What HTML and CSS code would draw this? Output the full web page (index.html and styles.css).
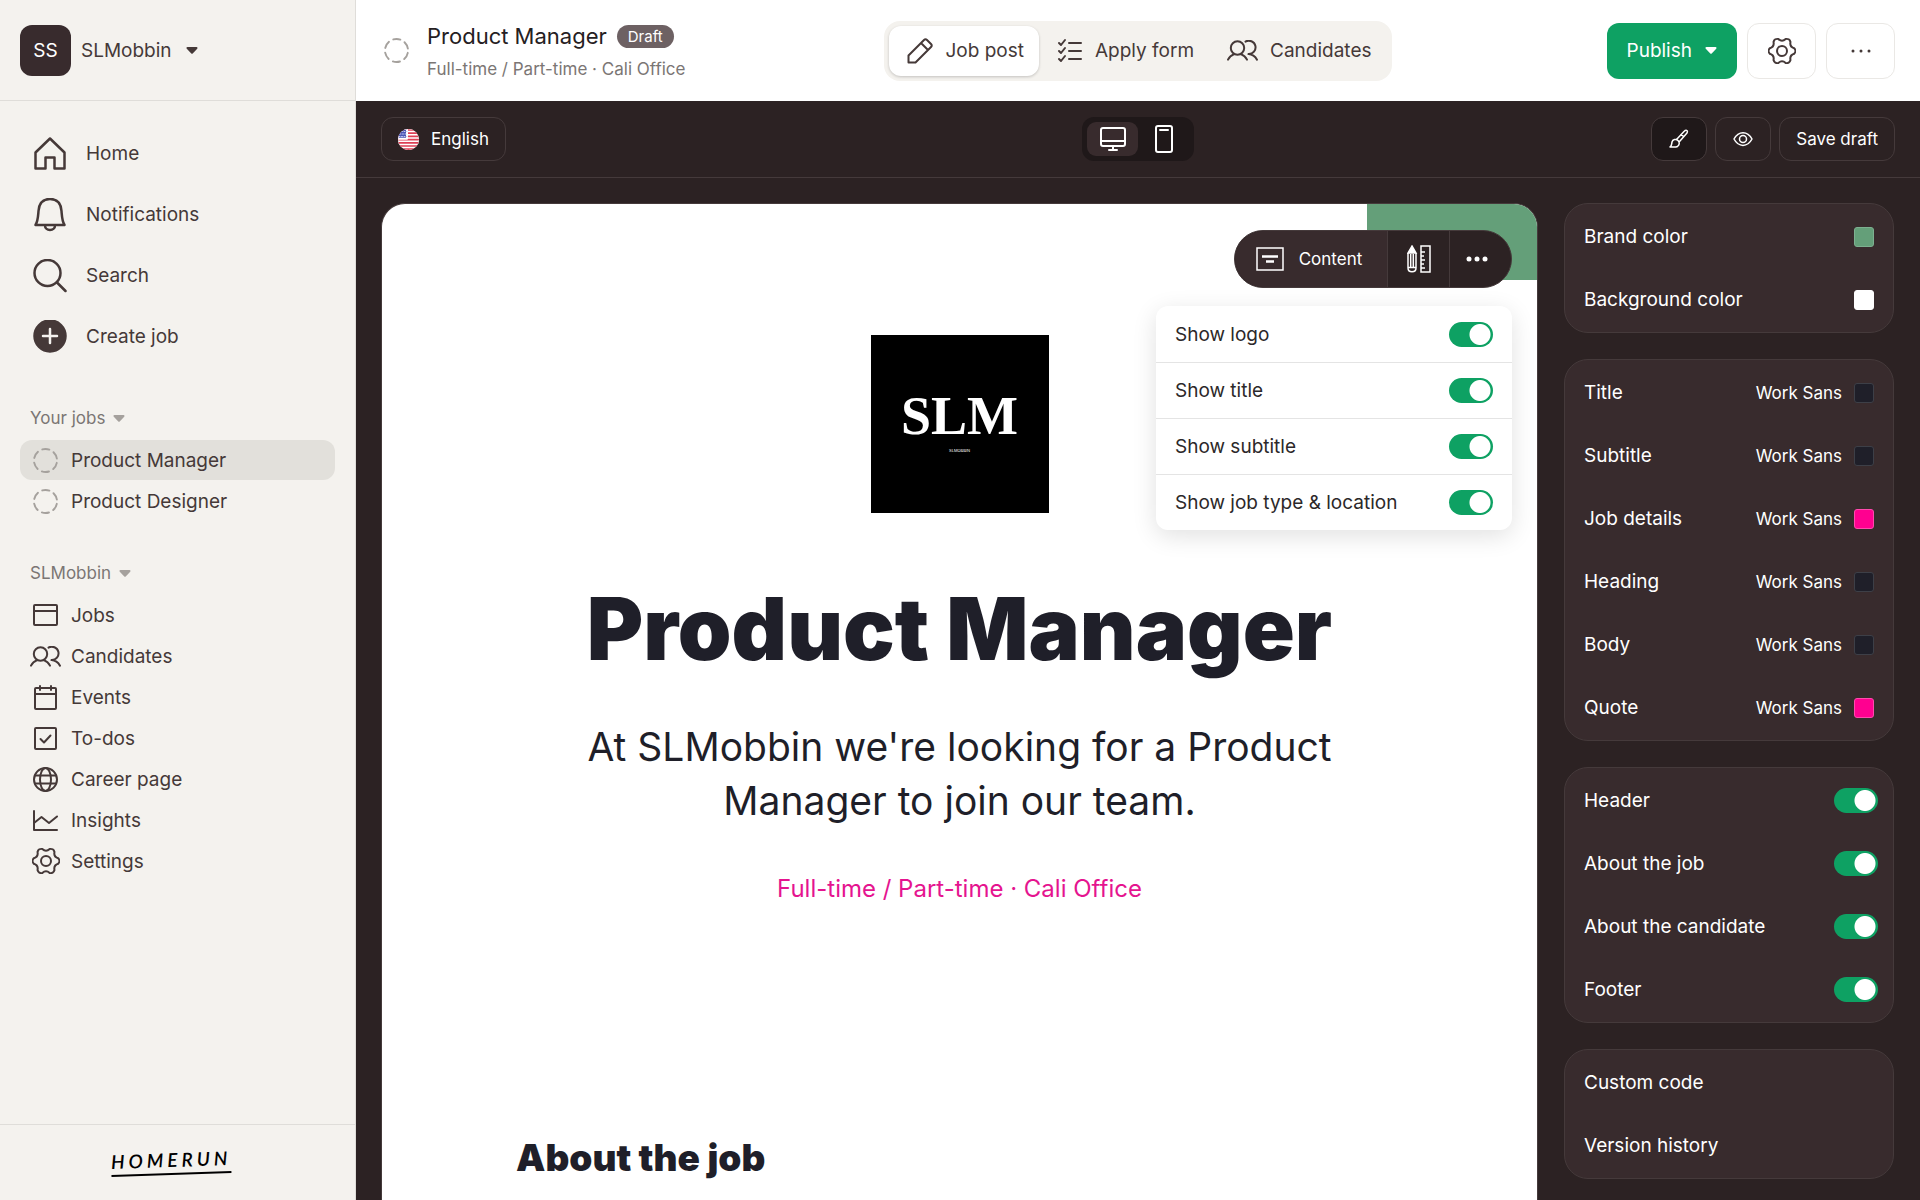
FILE: index.html
```html
<!DOCTYPE html>
<html lang="en">
<head>
    <meta charset="UTF-8">
    <meta name="viewport" content="width=device-width, initial-scale=1.0">
    <title>Product Manager - Homerun</title>
    <link rel="stylesheet" href="styles.css">
</head>
<body>
    <svg class="sprite" aria-hidden="true">
        <symbol id="dashed" viewBox="0 0 26 26"><circle cx="13" cy="13" r="12" stroke-dasharray="7.5 5.066" stroke-dashoffset="-2.5"/></symbol>
        <symbol id="caret" viewBox="0 0 12 7"><path d="M1.5 1h9L6 5.700z" fill="currentColor"/></symbol>
        <symbol id="people" viewBox="0 0 31 21"><circle cx="10.500" cy="8" r="6.700"/><path d="M1 19.700c1.500-3.200 3.500-4.700 6.300-5.600M20 19.700c-1.500-3.200-3.500-4.700-6.300-5.600M18.500 1.600a6.700 6.700 0 1 1 3 12.500c4.500.3 6.800 2.600 8.500 5.600"/></symbol>
        <symbol id="gear" viewBox="0 0 28 28"><circle cx="14" cy="14" r="5"/><path d="M26.200 11.200A4 4 0 0 1 26.200 16.800Q21.400 18.300 22.500 23.100A4 4 0 0 1 17.700 26Q14 22.500 10.300 26A4 4 0 0 1 5.500 23.100Q6.600 18.300 1.800 16.800A4 4 0 0 1 1.800 11.200Q6.600 9.700 5.500 4.900A4 4 0 0 1 10.300 2Q14 5.500 17.700 2A4 4 0 0 1 22.500 4.900Q21.400 9.700 26.200 11.200z"/></symbol>
    </svg>

    <div class="app">
        <aside class="sidebar">
            <button class="account" type="button">
                <span class="avatar">SS</span>
                <span>SLMobbin</span>
                <svg class="caret" width="12" height="7"><use href="#caret"/></svg>
            </button>

            <nav class="side-body">
                <div class="main-nav">
                    <a href="#">
                        <svg width="34" height="34" viewBox="0 0 34 34"><path d="M2.500 15.500 17 1.500l14.500 14V31.500H21.500V20.500h-9V31.500H2.500z"/></svg>
                        Home
                    </a>
                    <a href="#">
                        <svg width="34" height="34" viewBox="0 0 34 34"><path d="M2.500 27c2.500-4 2.500-8 3-14C6 5 10.500 1 17 1s11 4 11.500 12c.5 6 .5 10 3 14zM12 27.500c0 2.500 2 4.500 5 4.500s5-2 5-4.500"/></svg>
                        Notifications
                    </a>
                    <a href="#">
                        <svg width="34" height="34" viewBox="0 0 34 34"><circle cx="14.500" cy="14" r="13"/><path d="m24 23.500 8.500 8.500"/></svg>
                        Search
                    </a>
                    <a href="#">
                        <svg width="34" height="34" viewBox="0 0 34 34"><circle cx="17" cy="16" r="15.500" fill="currentColor"/><path d="M17 9v14M10 16h14" stroke="#f4f2ee"/></svg>
                        Create job
                    </a>
                </div>

                <button class="section-title" type="button">Your jobs <svg width="12" height="7"><use href="#caret"/></svg></button>
                <div class="sub-nav">
                    <a class="active" href="#"><svg class="dashed" width="25" height="25"><use href="#dashed"/></svg>Product Manager</a>
                    <a href="#"><svg class="dashed" width="25" height="25"><use href="#dashed"/></svg>Product Designer</a>
                </div>

                <button class="section-title" type="button">SLMobbin <svg width="12" height="7"><use href="#caret"/></svg></button>
                <div class="sub-nav">
                    <a href="#"><svg width="25" height="25" viewBox="0 0 25 25"><rect x="1" y="2" width="23" height="20" rx="1"/><path d="M1 8h23"/></svg>Jobs</a>
                    <a href="#"><svg width="31" height="21"><use href="#people"/></svg>Candidates</a>
                    <a href="#"><svg width="25" height="25" viewBox="0 0 25 25"><rect x="2" y="3" width="21" height="21" rx="1"/><path d="M2 9h21M7 1v4M18 1v4"/></svg>Events</a>
                    <a href="#"><svg width="25" height="25" viewBox="0 0 25 25"><rect x="2" y="2" width="21" height="21" rx="1"/><path d="m7.500 13 3.500 3.500 6.500-7"/></svg>To-dos</a>
                    <a href="#"><svg width="25" height="25" viewBox="0 0 25 25"><circle cx="12.500" cy="12.500" r="11.500"/><ellipse cx="12.500" cy="12.500" rx="5.500" ry="11.500"/><path d="M2 8.500h21M2 16.500h21"/></svg>Career page</a>
                    <a href="#"><svg width="25" height="25" viewBox="0 0 25 25"><path d="M1 3v19h23M1 15l7.500-6 7.500 6 8-6.500"/></svg>Insights</a>
                    <a href="#"><svg width="28" height="28"><use href="#gear"/></svg>Settings</a>
                </div>
            </nav>

            <footer class="side-footer">
                <a class="homerun" href="#">HOMERUN</a>
            </footer>
        </aside>

        <main class="main">
            <header class="topbar">
                <div class="job">
                    <svg class="dashed" width="25" height="25"><use href="#dashed"/></svg>
                    <div class="job-text">
                        <div class="job-title">Product Manager <span class="badge">Draft</span></div>
                        <div class="job-meta">Full-time / Part-time · Cali Office</div>
                    </div>
                </div>
                <nav class="tabs">
                    <a class="active" href="#">
                        <svg width="26" height="26" viewBox="0 0 26 26"><path d="M1.500 24.500v-7L17 2c1-1 2-1 3 0l4 4c1 1 1 2 0 3L8.500 24.500zM14 5l7 7"/></svg>
                        Job post
                    </a>
                    <a href="#">
                        <svg width="26" height="26" viewBox="0 0 26 26"><path d="M12 5h12M12 13h12M12 21h12M2 5l2 2 4-5M2 13l2 2 4-5M2 21l2 2 4-5"/></svg>
                        Apply form
                    </a>
                    <a href="#">
                        <svg width="31" height="21"><use href="#people"/></svg>
                        Candidates
                    </a>
                </nav>
                <div class="actions">
                    <button class="publish" type="button">Publish <svg width="12" height="7"><use href="#caret"/></svg></button>
                    <button class="square" type="button" aria-label="Settings"><svg width="28" height="28"><use href="#gear"/></svg></button>
                    <button class="square" type="button" aria-label="More"><svg width="22" height="4" viewBox="0 0 22 4"><g fill="currentColor" stroke="none"><circle cx="3" cy="2" r="1.500"/><circle cx="11" cy="2" r="1.500"/><circle cx="19" cy="2" r="1.500"/></g></svg></button>
                </div>
            </header>

            <div class="editor">
                <div class="toolbar">
                    <div>
                        <button class="tool language" type="button">
                            <svg width="21" height="21" viewBox="0 0 21 21" stroke="none">
                                <clipPath id="round"><circle cx="10.500" cy="10.500" r="10.500"/></clipPath>
                                <g clip-path="url(#round)">
                                    <path fill="#fff" d="M0 0h21v21H0z"/>
                                    <path stroke="#dd3f55" stroke-width="1.700" d="M0 1h21M0 4.200h21M0 7.400h21M0 10.600h21M0 13.800h21M0 17h21M0 20.200h21"/>
                                    <path fill="#4a55b5" d="M0 0h9v9.700H0z"/>
                                    <path stroke="#c3c8ee" stroke-width="1" stroke-dasharray="1 1.500" d="M1 2.500h8M2 5h7M1 7.500h8"/>
                                </g>
                            </svg>
                            English
                        </button>
                    </div>
                    <div class="devices">
                        <button class="active" type="button" aria-label="Desktop"><svg width="26" height="26" viewBox="0 0 26 26"><rect x="1" y="2" width="24" height="18" rx="2"/><path d="M1 15h24M13 20v4M9 24h8"/></svg></button>
                        <button type="button" aria-label="Mobile"><svg width="20" height="28" viewBox="0 0 20 28"><rect x="2" y="1" width="16" height="26" rx="2"/><path d="M6 5h8"/></svg></button>
                    </div>
                    <div class="tools">
                        <button class="tool icon pressed" type="button" aria-label="Style"><svg width="20" height="20" viewBox="0 0 20 20"><path d="M1 18c2-1 1.500-3 2-5 .6-2.500 4-3.500 6-1.500s1.500 4.500-.5 6C6.500 18.500 3.500 18 1 18zM7.500 10.500 15 2.500c1.500-1.500 4.500-2 3 1.500l-7.500 8.500M12 5.500l2.500 2"/></svg></button>
                        <button class="tool icon" type="button" aria-label="Preview"><svg width="20" height="16" viewBox="0 0 20 16"><path d="M1 8c4.500-8.500 13.500-8.500 18 0-4.500 8.500-13.500 8.500-18 0z"/><circle cx="10" cy="8" r="3.500"/></svg></button>
                        <button class="tool" type="button">Save draft</button>
                    </div>
                </div>

                <div class="workspace">
                    <section class="canvas">
                        <div class="brand-block"></div>
                        <div class="block-menu">
                            <div class="block-bar">
                                <button class="content" type="button">
                                    <svg width="28" height="24" viewBox="0 0 28 24"><path d="M1 1h26v22H1z"/><path d="M6 9.500h16M10 14.500h8" stroke-width="2.500"/></svg>
                                    Content
                                </button>
                                <button type="button" aria-label="Design"><svg width="24" height="28" viewBox="0 0 24 28" stroke-width="1.500"><path d="M1 8v15c0 5 8 5 8 0V8M1 22.500h8M3.700 9v13M6.300 9v13M14 1h9v26h-9zM14 7h4M14 11h3M14 15h4M14 19h3M14 23h4"/><path d="M5 1 1 8h8z" fill="currentColor"/></svg></button>
                                <button class="more" type="button" aria-label="More"><svg width="22" height="6" viewBox="0 0 22 6"><g fill="currentColor" stroke="none"><circle cx="3" cy="3" r="2.500"/><circle cx="11" cy="3" r="2.500"/><circle cx="19" cy="3" r="2.500"/></g></svg></button>
                            </div>
                            <div class="dropdown">
                                <label>Show logo <input class="toggle" type="checkbox" checked></label>
                                <label>Show title <input class="toggle" type="checkbox" checked></label>
                                <label>Show subtitle <input class="toggle" type="checkbox" checked></label>
                                <label>Show job type &amp; location <input class="toggle" type="checkbox" checked></label>
                            </div>
                        </div>

                        <div class="hero">
                            <div class="logo">
                                <span class="logo-name">SLM</span>
                                <span class="logo-sub">SLMOBBIN</span>
                            </div>
                            <h1>Product Manager</h1>
                            <p class="subtitle">At SLMobbin we're looking for a Product Manager to join our team.</p>
                            <p class="details">Full-time / Part-time · Cali Office</p>
                        </div>
                        <h2>About the job</h2>
                    </section>

                    <aside class="panel">
                        <div class="group">
                            <button class="row" type="button">Brand color <i class="swatch brand"></i></button>
                            <button class="row" type="button">Background color <i class="swatch white"></i></button>
                        </div>
                        <div class="group">
                            <button class="row" type="button">Title <span class="font">Work Sans</span><i class="swatch"></i></button>
                            <button class="row" type="button">Subtitle <span class="font">Work Sans</span><i class="swatch"></i></button>
                            <button class="row" type="button">Job details <span class="font">Work Sans</span><i class="swatch pink"></i></button>
                            <button class="row" type="button">Heading <span class="font">Work Sans</span><i class="swatch"></i></button>
                            <button class="row" type="button">Body <span class="font">Work Sans</span><i class="swatch"></i></button>
                            <button class="row" type="button">Quote <span class="font">Work Sans</span><i class="swatch pink"></i></button>
                        </div>
                        <div class="group">
                            <label class="row switch">Header <input class="toggle" type="checkbox" checked></label>
                            <label class="row switch">About the job <input class="toggle" type="checkbox" checked></label>
                            <label class="row switch">About the candidate <input class="toggle" type="checkbox" checked></label>
                            <label class="row switch">Footer <input class="toggle" type="checkbox" checked></label>
                        </div>
                        <div class="group">
                            <button class="row" type="button">Custom code</button>
                            <button class="row" type="button">Version history</button>
                        </div>
                    </aside>
                </div>
            </div>
        </main>
    </div>
</body>
</html>
```
FILE: styles.css
```css
* {
    box-sizing: border-box;
}
body {
    margin: 0;
    font-family: Inter, "Liberation Sans", sans-serif;
    font-size: 19px;
    color: #453938;
}
button {
    font: inherit;
    color: inherit;
    background: none;
    border: none;
    padding: 0;
    cursor: pointer;
}
a {
    color: inherit;
    text-decoration: none;
}
svg {
    fill: none;
    stroke: currentColor;
    stroke-width: 2;
    stroke-linecap: round;
    stroke-linejoin: round;
    flex-shrink: 0;
}
.sprite {
    display: none;
}
.dashed {
    color: #a5a19d;
}
.app {
    display: flex;
    height: 100vh;
    overflow: hidden;
}

/* Sidebar */
.sidebar {
    width: 356px;
    flex-shrink: 0;
    display: flex;
    flex-direction: column;
    background: #f4f2ee;
    border-right: 1px solid #dfddd9;
}
.account {
    height: 101px;
    padding: 0 20px;
    display: flex;
    align-items: center;
    gap: 10px;
    border-bottom: 1px solid #dfddd9;
}
.avatar {
    width: 51px;
    height: 51px;
    display: grid;
    place-items: center;
    border-radius: 12px;
    background: #382b2d;
    color: #fff;
}
.account .caret {
    margin-left: 4px;
}
.side-body {
    flex: 1;
    padding: 22px 20px 0;
}
.main-nav {
    margin-bottom: 35px;
}
.main-nav a {
    height: 61px;
    padding-left: 13px;
    display: flex;
    align-items: center;
    gap: 19px;
}
.main-nav svg {
    stroke-width: 2.5;
}
.section-title {
    height: 32px;
    padding-left: 10px;
    display: flex;
    align-items: center;
    gap: 8px;
    font-size: 17px;
    color: #7b7674;
}
.section-title svg {
    color: #a5a19d;
}
.sub-nav {
    margin: 6px 0 36px;
    display: grid;
    gap: 1px;
}
.sub-nav a {
    height: 40px;
    display: grid;
    grid-template-columns: 51px 1fr;
    align-items: center;
    border-radius: 12px;
}
.sub-nav svg {
    justify-self: center;
}
.sub-nav .active {
    background: #e2e0db;
}
.side-footer {
    height: 76px;
    padding: 0 14px 4px 0;
    display: grid;
    place-items: center;
    border-top: 1px solid #dfddd9;
}
.homerun {
    width: 120px;
    border-bottom: 2px solid #000;
    transform: rotate(-2deg);
    font-family: Lato, sans-serif;
    font-size: 19px;
    font-weight: 600;
    font-style: italic;
    letter-spacing: 4px;
    line-height: 26px;
    white-space: nowrap;
    color: #000;
}

/* Top bar */
.main {
    flex: 1;
    min-width: 0;
    display: flex;
    flex-direction: column;
}
.topbar {
    height: 101px;
    padding: 0 25px;
    display: grid;
    grid-template-columns: 1fr auto 1fr;
    align-items: center;
    background: #fff;
}
.job {
    padding-left: 3px;
    display: flex;
    align-items: center;
    gap: 18px;
}
.job-text {
    padding-top: 3px;
}
.job-title {
    display: flex;
    align-items: center;
    gap: 10px;
    font-size: 22px;
    line-height: 34px;
    color: #252022;
}
.badge {
    padding: 0 11px;
    border-radius: 12px;
    background: #6d6163;
    color: #fff;
    font-size: 15px;
    line-height: 23px;
}
.job-meta {
    font-size: 17px;
    line-height: 32px;
    color: #7b7674;
}
.tabs {
    height: 60px;
    padding: 5px;
    display: flex;
    border-radius: 16px;
    background: #f4f2ee;
}
.tabs a {
    padding: 0 15px 0 18px;
    display: flex;
    align-items: center;
    gap: 12px;
    border-radius: 12px;
}
.tabs .active {
    background: #fff;
    box-shadow: 0 1px 3px rgba(0, 0, 0, 0.2);
}
.actions {
    display: flex;
    justify-content: flex-end;
    gap: 10px;
}
.publish,
.square {
    height: 56px;
    display: flex;
    align-items: center;
    justify-content: center;
    border-radius: 12px;
}
.publish {
    padding: 0 20px;
    gap: 13px;
    background: #0ea163;
    color: #fff;
}
.square {
    width: 69px;
    border: 1px solid #eae8e5;
}

/* Editor */
.editor {
    flex: 1;
    min-height: 0;
    display: flex;
    flex-direction: column;
    background: #2c2223;
    color: #fff;
}
.toolbar {
    height: 77px;
    flex-shrink: 0;
    padding: 0 25px;
    display: grid;
    grid-template-columns: 1fr auto 1fr;
    align-items: center;
    border-bottom: 1px solid #453a3b;
}
.tool {
    height: 44px;
    padding: 0 16px;
    border: 1px solid #453a3b;
    border-radius: 12px;
    font-size: 17px;
}
.language {
    display: flex;
    align-items: center;
    gap: 12px;
}
.devices {
    height: 44px;
    padding: 5px;
    display: flex;
    border-radius: 12px;
    background: #1f1819;
}
.devices button {
    width: 51px;
    display: grid;
    place-items: center;
    border-radius: 9px;
}
.devices .active {
    background: #382b2d;
}
.tools {
    display: flex;
    justify-content: flex-end;
    gap: 8px;
}
.icon {
    width: 56px;
    display: grid;
    place-items: center;
}
.icon svg {
    stroke-width: 1.5;
}
.pressed {
    background: #1f1819;
}
.workspace {
    flex: 1;
    min-height: 0;
    padding: 25px 26px 0 25px;
    display: flex;
    gap: 26px;
}

/* Job post preview */
.canvas {
    position: relative;
    flex: 1;
    overflow: hidden;
    border: 1px solid #453a3b;
    border-bottom: none;
    border-radius: 24px 24px 0 0;
    background: #fff;
    color: #1f1f29;
}
.brand-block {
    position: absolute;
    top: 0;
    right: 0;
    width: 170px;
    height: 76px;
    background: #649f79;
}
.block-menu {
    position: absolute;
    top: 26px;
    right: 25px;
    width: 356px;
    display: flex;
    flex-direction: column;
    align-items: flex-end;
    gap: 18px;
}
.block-bar {
    height: 58px;
    display: flex;
    overflow: hidden;
    border: 1px solid #453a3b;
    border-radius: 29px;
    background: #2c2223;
    color: #fff;
    font-size: 17px;
}
.block-bar button {
    width: 62px;
    display: flex;
    align-items: center;
    justify-content: center;
    gap: 15px;
}
.block-bar button + button {
    border-left: 1px solid #453a3b;
}
.block-bar svg {
    stroke-width: 1.5;
    stroke-linecap: butt;
    stroke-linejoin: miter;
}
.block-bar .content {
    width: 152px;
    padding-right: 4px;
    background: #382b2d;
}
.block-bar .more {
    padding-right: 8px;
}
.dropdown {
    width: 100%;
    border-radius: 12px;
    background: #fff;
    box-shadow: 0 6px 24px rgba(0, 0, 0, 0.12);
    color: #2c2829;
}
.dropdown label {
    height: 56px;
    padding: 0 19px;
    display: flex;
    align-items: center;
    justify-content: space-between;
}
.dropdown label + label {
    border-top: 1px solid #e4e4e4;
}
.toggle {
    appearance: none;
    width: 44px;
    height: 25px;
    margin: 0;
    border-radius: 13px;
    background: radial-gradient(circle at 31px 50%, #fff 10px, #0ea163 11px);
}
.hero {
    padding: 131px 134px 0;
    text-align: center;
}
.logo {
    width: 178px;
    height: 178px;
    margin: 0 auto;
    padding-bottom: 8px;
    display: flex;
    flex-direction: column;
    align-items: center;
    justify-content: center;
    background: #000;
    color: #fff;
}
.logo-name {
    font-family: "Liberation Serif", serif;
    font-size: 54px;
    font-weight: 700;
    line-height: 62px;
}
.logo-sub {
    font-size: 4px;
    line-height: 8px;
}
h1 {
    margin: 61px 0 0;
    font-size: 86px;
    font-weight: 900;
    line-height: 110px;
}
.subtitle {
    max-width: 790px;
    margin: 36px auto 0;
    font-size: 39px;
    line-height: 54px;
}
.details {
    margin: 46px 0 0;
    font-size: 24px;
    line-height: 30px;
    color: #e5148f;
}
h2 {
    margin: 232px 134px 0;
    font-size: 37px;
    font-weight: 900;
    line-height: 44px;
}

/* Style panel */
.panel {
    width: 330px;
    flex-shrink: 0;
    display: flex;
    flex-direction: column;
    gap: 26px;
}
.group {
    padding: 1px 0;
    border: 1px solid #453a3b;
    border-radius: 24px;
    background: #382b2d;
}
.row {
    width: 100%;
    height: 63px;
    padding: 0 19px;
    display: flex;
    align-items: center;
    justify-content: space-between;
}
.switch {
    padding-right: 15px;
}
.font {
    margin-left: auto;
    font-size: 17px;
}
.swatch {
    width: 20px;
    height: 20px;
    margin-left: 12px;
    border: 1px solid #3d3f47;
    border-radius: 3px;
    background: #1f1f29;
}
.brand {
    border-color: #7db090;
    background: #649f79;
}
.white {
    border-color: #fff;
    background: #fff;
}
.pink {
    border-color: #ff4aad;
    background: #ff0090;
}
```
